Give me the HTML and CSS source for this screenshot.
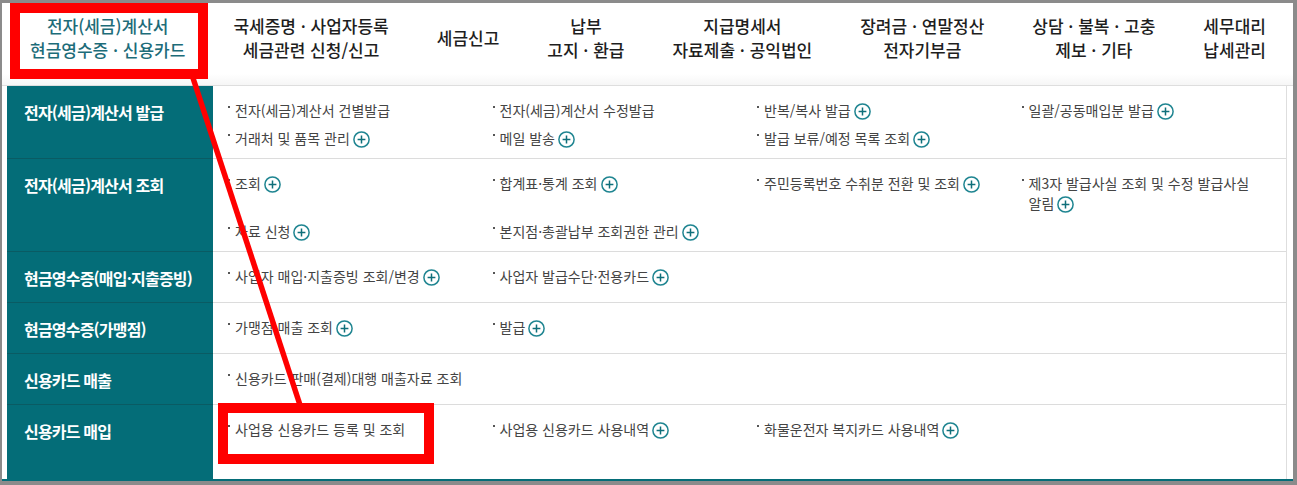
FILE: index.html
```html
<!DOCTYPE html>
<html lang="ko">
<head>
    <meta charset="UTF-8">
    <meta name="viewport" content="width=device-width, initial-scale=1.0">
    <title>전자(세금)계산서 · 현금영수증 · 신용카드</title>
    <link rel="stylesheet" href="styles.css">
</head>
<body>

<svg class="sprite" xmlns="http://www.w3.org/2000/svg">
    <symbol id="plus" viewBox="0 0 17 17">
        <circle cx="8.5" cy="8.5" r="7.6" fill="#fff" stroke="#1f8591" stroke-width="1.5"/>
        <path d="M8.5 4.6v7.8M4.6 8.5h7.8" stroke="#0f6f7a" stroke-width="1.5"/>
    </symbol>
</svg>

<div class="frame">
    <!-- top menu -->
    <nav class="gnb">
        <a class="gnb-item active" href="#">전자(세금)계산서<br>현금영수증 · 신용카드</a>
        <a class="gnb-item" href="#">국세증명 · 사업자등록<br>세금관련 신청/신고</a>
        <a class="gnb-item" href="#">세금신고</a>
        <a class="gnb-item" href="#">납부<br>고지 · 환급</a>
        <a class="gnb-item" href="#">지급명세서<br>자료제출 · 공익법인</a>
        <a class="gnb-item" href="#">장려금 · 연말정산<br>전자기부금</a>
        <a class="gnb-item" href="#">상담 · 불복 · 고충<br>제보 · 기타</a>
        <a class="gnb-item" href="#">세무대리<br>납세관리</a>
    </nav>

    <!-- sub menu -->
    <div class="menu">
        <div class="row">
            <div class="row-title">전자(세금)계산서 발급</div>
            <ul class="links">
                <li><a href="#">전자(세금)계산서 건별발급</a></li>
                <li><a href="#">전자(세금)계산서 수정발급</a></li>
                <li><a href="#">반복/복사 발급<svg class="more"><use href="#plus"/></svg></a></li>
                <li><a href="#">일괄/공동매입분 발급<svg class="more"><use href="#plus"/></svg></a></li>
                <li><a href="#">거래처 및 품목 관리<svg class="more"><use href="#plus"/></svg></a></li>
                <li><a href="#">메일 발송<svg class="more"><use href="#plus"/></svg></a></li>
                <li><a href="#">발급 보류/예정 목록 조회<svg class="more"><use href="#plus"/></svg></a></li>
            </ul>
        </div>
        <div class="row">
            <div class="row-title">전자(세금)계산서 조회</div>
            <ul class="links">
                <li><a href="#">조회<svg class="more"><use href="#plus"/></svg></a></li>
                <li><a href="#">합계표·통계 조회<svg class="more"><use href="#plus"/></svg></a></li>
                <li><a href="#">주민등록번호 수취분 전환 및 조회<svg class="more"><use href="#plus"/></svg></a></li>
                <li><a href="#">제3자 발급사실 조회 및 수정 발급사실 <span class="nowrap">알림<svg class="more"><use href="#plus"/></svg></span></a></li>
                <li><a href="#">자료 신청<svg class="more"><use href="#plus"/></svg></a></li>
                <li><a href="#">본지점·총괄납부 조회권한 관리<svg class="more"><use href="#plus"/></svg></a></li>
            </ul>
        </div>
        <div class="row">
            <div class="row-title">현금영수증(매입·지출증빙)</div>
            <ul class="links">
                <li><a href="#">사업자 매입·지출증빙 조회/변경<svg class="more"><use href="#plus"/></svg></a></li>
                <li><a href="#">사업자 발급수단·전용카드<svg class="more"><use href="#plus"/></svg></a></li>
            </ul>
        </div>
        <div class="row">
            <div class="row-title">현금영수증(가맹점)</div>
            <ul class="links">
                <li><a href="#">가맹점 매출 조회<svg class="more"><use href="#plus"/></svg></a></li>
                <li><a href="#">발급<svg class="more"><use href="#plus"/></svg></a></li>
            </ul>
        </div>
        <div class="row">
            <div class="row-title">신용카드 매출</div>
            <ul class="links">
                <li><a href="#">신용카드 판매(결제)대행 매출자료 조회</a></li>
            </ul>
        </div>
        <div class="row last">
            <div class="row-title">신용카드 매입</div>
            <ul class="links">
                <li><a href="#">사업용 신용카드 등록 및 조회</a></li>
                <li><a href="#">사업용 신용카드 사용내역<svg class="more"><use href="#plus"/></svg></a></li>
                <li><a href="#">화물운전자 복지카드 사용내역<svg class="more"><use href="#plus"/></svg></a></li>
            </ul>
        </div>
    </div>
</div>

<!-- red annotation drawn over the screenshot -->
<svg class="marks" width="1297" height="485" xmlns="http://www.w3.org/2000/svg">
    <rect x="15" y="8" width="188" height="66" fill="none" stroke="#ff0000" stroke-width="10"/>
    <line x1="193" y1="78" x2="300" y2="405" stroke="#ff0000" stroke-width="5.5"/>
    <rect x="223" y="408" width="206" height="51" fill="none" stroke="#ff0000" stroke-width="10"/>
</svg>

</body>
</html>
```

FILE: styles.css
```css
body {
    margin: 0;
    padding: 3px 4px 4px 2px;
    background: #8b8b8b;
    font-family: "Noto Sans CJK KR", "Malgun Gothic", sans-serif;
    color: #444;
}
.sprite {
    display: none;
}
.frame {
    background: #fff;
    border-bottom: 2px solid #046d78;
}
.gnb {
    display: flex;
    height: 82px;
    padding-left: 4px;
    border-bottom: 1px solid #dedede;
    background: linear-gradient(#fff 86%, #f6f6f6);
}
.gnb-item {
    display: flex;
    align-items: center;
    justify-content: center;
    height: 48px;
    margin-top: 11px;
    padding: 0 24px;
    text-align: center;
    font-size: 17px;
    font-weight: 500;
    line-height: 24px;
    color: #1e1e1e;
    text-decoration: none;
}
.gnb-item.active {
    color: #1d6c79;
}
.menu {
    margin: 0 6px 0 5px;
    border-right: 1px solid #dedede;
}
.row {
    display: flex;
}
.row-title {
    flex: none;
    width: 206px;
    box-sizing: border-box;
    padding: 14px 0 12px 17px;
    background: #046d78;
    border-bottom: 1px solid #0a5b63;
    color: #fff;
    font-size: 16px;
    font-weight: bold;
    line-height: 24px;
    letter-spacing: -0.8px;
    white-space: nowrap;
}
.links {
    flex: 1;
    display: grid;
    grid-template-columns: repeat(4, 1fr);
    align-content: start;
    row-gap: 8px;
    margin: 0;
    padding: 14px 0 10px 15px;
    list-style: none;
    border-bottom: 1px solid #dcdcdc;
    font-size: 14px;
    line-height: 20px;
    word-break: keep-all;
}
.links li {
    display: flex;
    padding-right: 12px;
}
.links li::before {
    content: "";
    flex: none;
    width: 2px;
    height: 2px;
    margin: 6px 5px 0 0;
    background: #555;
}
.links a {
    color: #444;
    text-decoration: none;
}
.nowrap {
    white-space: nowrap;
}
.more {
    width: 17px;
    height: 17px;
    margin-left: 3px;
    vertical-align: -4px;
}
.row.last {
    min-height: 74px;
}
.row.last .row-title,
.row.last .links {
    border-bottom: none;
}
.marks {
    position: absolute;
    top: 0;
    left: 0;
    pointer-events: none;
}
```
